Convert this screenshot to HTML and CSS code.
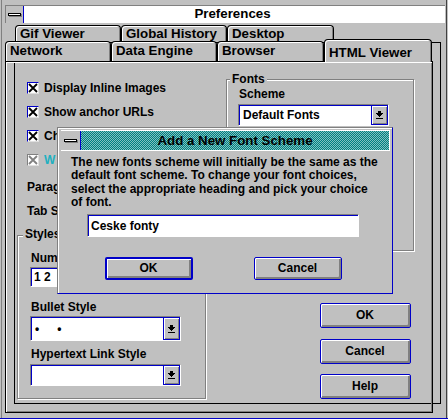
FILE: index.html
```html
<!DOCTYPE html>
<html>
<head>
<meta charset="utf-8">
<title>Preferences</title>
<link rel="stylesheet" href="styles.css">
</head>
<body>
<div class="window">
  <div class="titlebar">
    <div class="sysmenu"><span class="sysbar"></span></div>
    <div class="title">Preferences</div>
  </div>

  <div class="backpage"></div>

  <div class="tabrow back">
    <div class="tab w106">Gif Viewer</div>
    <div class="tab w106">Global History</div>
    <div class="tab w107">Desktop</div>
  </div>
  <div class="tabrow front">
    <div class="tab w106">Network</div>
    <div class="tab w106">Data Engine</div>
    <div class="tab w107">Browser</div>
    <div class="tab w108 active">HTML Viewer</div>
  </div>

  <div class="page">
    <div class="col-left">
      <div class="check"><span class="box"><svg width="10" height="10" viewBox="0 0 10 10"><path d="M1 1L9 9M9 1L1 9" stroke="#000" stroke-width="1.8"/></svg></span><span>Display Inline Images</span></div>
      <div class="check"><span class="box"><svg width="10" height="10" viewBox="0 0 10 10"><path d="M1 1L9 9M9 1L1 9" stroke="#000" stroke-width="1.8"/></svg></span><span>Show anchor URLs</span></div>
      <div class="check"><span class="box"><svg width="10" height="10" viewBox="0 0 10 10"><path d="M1 1L9 9M9 1L1 9" stroke="#000" stroke-width="1.8"/></svg></span><span>Ch</span></div>
      <div class="check disabled"><span class="box"><svg width="10" height="10" viewBox="0 0 10 10"><path d="M1 1L9 9M9 1L1 9" stroke="#808080" stroke-width="1.8"/></svg></span><span>W</span></div>

      <div class="label lbl-para">Parag</div>
      <div class="label lbl-tab">Tab S</div>

      <div class="group styles">
        <div class="legend lg-styles">Styles</div>
        <div class="label lbl-num">Num</div>
        <div class="edit num">1 2</div>
        <div class="label lbl-bullet">Bullet Style</div>
        <div class="combo bullet">
          <div class="field"><span class="dots"><span>•</span><span>•</span></span></div>
          <div class="drop"><svg width="7" height="8" viewBox="0 0 7 8" shape-rendering="crispEdges"><path d="M2 0h3v2H2zM0 2h7v1H0zM1 3h5v1H1zM2 4h3v1H2zM3 5h1v1H3zM0 7h7v1H0z"/></svg></div>
        </div>
        <div class="label lbl-link">Hypertext Link Style</div>
        <div class="combo link">
          <div class="field"></div>
          <div class="drop"><svg width="7" height="8" viewBox="0 0 7 8" shape-rendering="crispEdges"><path d="M2 0h3v2H2zM0 2h7v1H0zM1 3h5v1H1zM2 4h3v1H2zM3 5h1v1H3zM0 7h7v1H0z"/></svg></div>
        </div>
      </div>
    </div>

    <div class="col-right">
      <div class="group fonts">
        <div class="legend lg-fonts">Fonts</div>
        <div class="label lbl-scheme">Scheme</div>
        <div class="combo scheme">
          <div class="field">Default Fonts</div>
          <div class="drop"><svg width="7" height="8" viewBox="0 0 7 8" shape-rendering="crispEdges"><path d="M2 0h3v2H2zM0 2h7v1H0zM1 3h5v1H1zM2 4h3v1H2zM3 5h1v1H3zM0 7h7v1H0z"/></svg></div>
        </div>
      </div>
      <div class="buttons">
        <div class="btn main-ok">OK</div>
        <div class="btn main-cancel">Cancel</div>
        <div class="btn main-help">Help</div>
      </div>
    </div>
  </div>

  <div class="modal">
    <div class="mtitlebar">
      <div class="msys"><span class="sysbar"></span></div>
      <div class="mtitle">Add a New Font Scheme</div>
    </div>
    <div class="mtext">The new fonts scheme will initially be the same as the<br>default font scheme. To change your font choices,<br>select the appropriate heading and pick your choice<br>of font.</div>
    <div class="edit mname">Ceske fonty</div>
    <div class="mbuttons">
      <div class="btn default">OK</div>
      <div class="btn">Cancel</div>
    </div>
  </div>
</div>
</body>
</html>
```

FILE: styles.css
```css
* { box-sizing: border-box; }
html, body { margin: 0; padding: 0; }
body {
  width: 448px;
  height: 419px;
  overflow: hidden;
  background: #c0c0c0;
  font-family: "Liberation Sans", Arial, sans-serif;
  font-weight: bold;
  font-size: 12px;
  color: #000;
}

.window {
  position: relative;
  z-index: 0;
  width: 448px;
  height: 419px;
  padding-top: 5px;
  border-bottom: 1px solid #0000c8;
  box-shadow: inset 1px 0 0 #c0c0c0, inset 2px 0 0 #808080,
              inset -1px 0 0 #c0c0c0, inset -2px 0 0 #404040;
}

/* title bar */
.titlebar {
  display: flex;
  height: 18px;
  margin: 0 3px 0 5px;
  border-top: 1px solid #808080;
  border-left: 1px solid #808080;
}
.sysmenu {
  width: 18px;
  border-right: 1px solid #0000c8;
  display: flex;
  align-items: center;
  justify-content: center;
  padding-right: 1px;
}
.sysbar {
  display: block;
  width: 13px;
  height: 3px;
  border: 1px solid #000;
  background: #fff;
  box-shadow: 1px 1px 0 #808080;
}
.title {
  flex: 1;
  background: #fff;
  text-align: center;
  font-size: 13.3px;
  line-height: 16px;
  padding-right: 4px;
}

/* tabs */
.backpage {
  position: absolute;
  z-index: -1;
  left: 14px;
  top: 42px;
  width: 427px;
  height: 362px;
  border: 1px solid #000;
  background: #c0c0c0;
}
.tabrow { display: flex; }
.tabrow.back { margin: 2px 0 0 15px; height: 16px; }
.tabrow.front { margin-left: 5px; height: 20px; }
.tab {
  border: 1px solid #000;
  border-bottom: none;
  border-radius: 4px 4px 0 0;
  box-shadow: inset 1px 1px 0 #fff, inset -1px 0 0 #808080;
  background: #c0c0c0;
  font-size: 13.3px;
  padding-left: 4px;
  white-space: nowrap;
  overflow: hidden;
}
.back .tab { padding-top: 1px; line-height: 14px; }
.front .tab { line-height: 18px; }
.tab.active {
  position: relative;
  z-index: 2;
  align-self: flex-start;
  margin-top: -2px;
  height: 23px;
  padding-top: 4px;
}
.w106 { width: 106px; }
.w107 { width: 107px; }
.w108 { width: 108px; }

/* page */
.page {
  margin-left: 5px;
  width: 428px;
  height: 352px;
  border: 1px solid #000;
  box-shadow: inset 1px 1px 0 #fff, inset -1px -1px 0 #808080;
  display: grid;
  grid-template-columns: 200px 1fr;
}
.col-left {
  padding: 20px 0 0 11px;
  display: flex;
  flex-direction: column;
  align-items: flex-start;
}
.col-right {
  padding: 17px 0 0 20px;
  display: flex;
  flex-direction: column;
  align-items: flex-start;
}

.check {
  display: flex;
  align-items: center;
  gap: 5px;
  height: 12px;
  line-height: 12px;
  margin: 0 0 12px 10px;
  white-space: nowrap;
}
.box {
  width: 12px;
  height: 12px;
  border: 1px solid;
  border-color: #0000c8 #dfdfdf #dfdfdf #0000c8;
  background: #fff;
  display: flex;
}
.check.disabled .box { border-color: #808080 #dfdfdf #dfdfdf #808080; }
.check.disabled { color: #20b0c0; }

.label { line-height: 14px; white-space: nowrap; }
.lbl-para { margin: 2px 0 0 10px; }
.lbl-tab { margin: 10px 0 0 10px; }

.group {
  border: 1px solid #808080;
  box-shadow: inset 1px 1px 0 #fff, 1px 1px 0 #fff;
  display: flex;
  flex-direction: column;
  align-items: flex-start;
}
.legend {
  background: #c0c0c0;
  padding: 0 2px;
  line-height: 14px;
}
.styles {
  width: 189px;
  margin-top: 17px;
  padding: 0 0 12px 13px;
}
.lg-styles { margin: -9px 0 0 -8px; }
.lbl-num { margin-top: 10px; }
.edit {
  border: 1px solid;
  border-color: #808080 #fff #fff #808080;
  background: #fff;
  box-shadow: inset 1px 1px 0 #0000c8;
  padding-left: 3px;
  display: flex;
  align-items: center;
  white-space: nowrap;
}
.num { margin: 2px 0 0 -1px; width: 60px; height: 20px; }
.lbl-bullet { margin-top: 13px; }
.combo {
  display: flex;
  width: 151px;
  border: 1px solid;
  border-color: #808080 #fff #fff #808080;
  background: #fff;
}
.combo .field {
  flex: 1;
  box-shadow: inset 1px 1px 0 #0000c8;
  padding-left: 4px;
  display: flex;
  align-items: center;
  white-space: nowrap;
}
.combo .drop {
  width: 17px;
  border: 1px solid #0000c8;
  background: #c0c0c0;
  box-shadow: inset 1px 1px 0 #fff, inset -1px -1px 0 #808080;
  display: flex;
  align-items: center;
  justify-content: center;
}
.bullet { margin: 2px 0 0 -1px; height: 25px; }
.dots { display: flex; gap: 18px; }
.lbl-link { margin-top: 6px; }
.link { margin: 3px 0 0 -1px; height: 22px; }

.fonts {
  width: 188px;
  height: 172px;
  padding-left: 12px;
}
.lg-fonts { margin: -8px 0 0 -9px; }
.lbl-scheme { margin-top: 1px; }
.scheme { margin: 3px 0 0 -1px; height: 22px; }

.buttons {
  margin: 52px 0 0 94px;
  display: flex;
  flex-direction: column;
}
.btn {
  width: 91px;
  height: 25px;
  border: 1px solid #0000c8;
  border-radius: 2px;
  background: #c0c0c0;
  box-shadow: inset 1px 1px 0 #fff, inset -2px -2px 0 #808080;
  display: flex;
  align-items: center;
  justify-content: center;
  padding: 0 1px 1px 0;
}
.main-cancel { margin-top: 11px; }
.main-help { margin-top: 10px; }

/* modal dialog */
.modal {
  position: absolute;
  z-index: 5;
  left: 57px;
  top: 127px;
  width: 336px;
  height: 167px;
  background: #c0c0c0;
  border: 1px solid;
  border-color: #808080 #0000c8 #0000c8 #808080;
  box-shadow: inset 1px 1px 0 #fff;
  padding: 2px 2px 0 3px;
  display: flex;
  flex-direction: column;
  align-items: flex-start;
}
.mtitlebar {
  display: flex;
  width: 100%;
  height: 21px;
  border: 1px solid #fff;
  border-left: none;
}
.msys {
  width: 20px;
  border-right: 1px solid #0000c8;
  display: flex;
  align-items: center;
  justify-content: center;
}
.mtitle {
  flex: 1;
  background: repeating-conic-gradient(#008080 0 25%, #80c0c0 0 50%) 0 0 / 2px 2px;
  text-align: center;
  line-height: 19px;
  font-size: 13.3px;
  white-space: nowrap;
}
.mtext {
  margin: 5px 0 0 10px;
  line-height: 13.33px;
  white-space: nowrap;
}
.mname {
  margin: 5px 0 0 26px;
  width: 272px;
  height: 23px;
}
.mbuttons {
  display: flex;
  gap: 61px;
  margin: 20px 0 0 44px;
}
.mbuttons .btn { width: 88px; height: 23px; }
.btn.default { border-width: 2px; }
```
